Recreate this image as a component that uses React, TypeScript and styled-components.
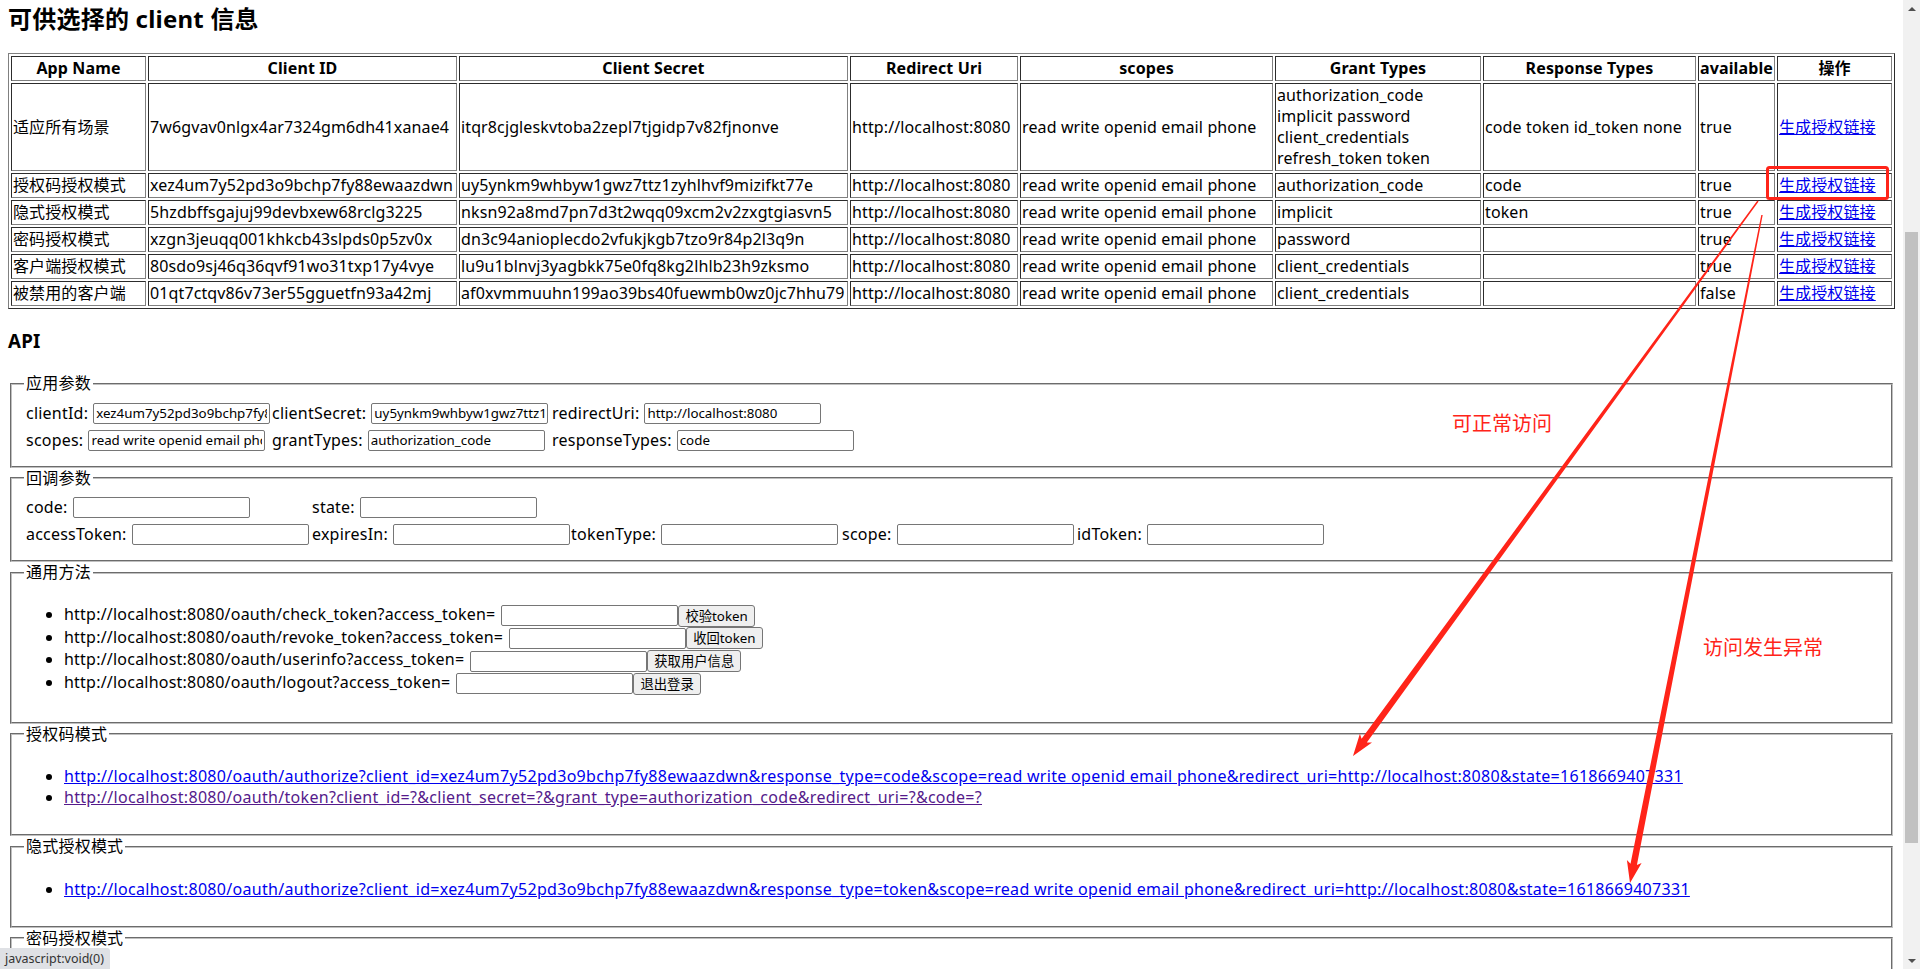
import React from 'react';
import styled, { createGlobalStyle } from 'styled-components';

const RED = '#ff2419';

const GlobalStyle = createGlobalStyle`
  html, body {
    margin: 0;
    padding: 0;
  }

  body {
    font-family: "Noto Sans", "Noto Sans CJK SC", sans-serif;
    font-size: 16px;
    line-height: 21px;
    letter-spacing: 0.22px;
    color: #000;
    background: #fff;
  }
`;

const Shell = styled.div`
  position: relative;
  display: flex;
  height: 100vh;
  overflow: hidden;
`;

const Page = styled.main`
  flex: 1;
  min-width: 0;
  padding: 0 8px;
  overflow: hidden;
`;

const Title = styled.h2`
  margin: 3px 0 0;
  font-size: 24px;
  line-height: 32px;
  font-weight: bold;
`;

const SectionTitle = styled.h3`
  margin: 20px 0;
  font-size: 18.72px;
  line-height: 24px;
  font-weight: bold;
`;

const ClientTable = styled.table`
  width: 100%;
  margin-top: 18px;
  table-layout: fixed;
  border: 1px outset grey;
  border-spacing: 2px;
  letter-spacing: 0.12px;
`;

const Col = styled.col<{ $w: number }>`
  width: ${(p) => p.$w}px;
`;

const HeadCell = styled.th`
  border: 1px inset grey;
  padding: 1px;
  font-weight: bold;
  text-align: center;
  white-space: nowrap;
  overflow: hidden;
`;

const Cell = styled.td<{ $wrap?: boolean }>`
  border: 1px inset grey;
  padding: 1px;
  vertical-align: middle;
  white-space: ${(p) => (p.$wrap ? 'normal' : 'nowrap')};
  overflow: hidden;
`;

const Link = styled.a<{ $visited?: boolean }>`
  color: ${(p) => (p.$visited ? '#551a8b' : '#0000ee')};
  text-decoration: underline;
  cursor: pointer;
`;

const Fieldset = styled.fieldset<{ $minHeight?: number }>`
  margin: 0 2px;
  padding: 5.6px 12px 10px;
  border: 2px groove rgb(192, 192, 192);
  min-width: 0;
  min-height: ${(p) => (p.$minHeight ? `${p.$minHeight}px` : 'auto')};
`;

const Legend = styled.legend`
  padding: 0 2px;
  line-height: 21px;
`;

const ParamGrid = styled.div<{ $cols: string }>`
  display: grid;
  grid-template-columns: ${(p) => p.$cols};
  grid-auto-rows: 27px;
  padding-bottom: 2px;
`;

const Field = styled.label<{ $col?: number }>`
  display: flex;
  align-items: center;
  gap: 5px;
  white-space: nowrap;
  padding-left: 2px;
  grid-column: ${(p) => (p.$col ? `${p.$col} / span 1` : 'auto')};
`;

const TextInput = styled.input`
  box-sizing: border-box;
  flex: none;
  width: 177px;
  height: 21px;
  padding: 1px 2px;
  border: 1px solid #767676;
  border-radius: 2px;
  background: #fff;
  color: #000;
  font-family: "Noto Sans", "Noto Sans CJK SC", sans-serif;
  font-size: 13.33px;
  letter-spacing: 0;
  outline: none;
`;

const InlineInput = styled(TextInput)`
  margin-left: 6px;
  vertical-align: middle;
`;

const Button = styled.button`
  box-sizing: border-box;
  height: 22px;
  padding: 1px 6px;
  border: 1px solid #767676;
  border-radius: 3px;
  background: #efefef;
  color: #000;
  font-family: "Noto Sans", "Noto Sans CJK SC", sans-serif;
  font-size: 13.33px;
  line-height: 18px;
  letter-spacing: 0;
  vertical-align: middle;
`;

const List = styled.ul<{ $tight?: boolean }>`
  margin: ${(p) => (p.$tight ? '14px 0 18px' : '16px 0')};
  padding-left: 40px;
`;

const MethodItem = styled.li`
  height: 22.75px;
  line-height: 22.75px;
  white-space: nowrap;
`;

const LinkItem = styled.li`
  line-height: 21px;
  white-space: nowrap;
  letter-spacing: 0.3px;
`;

const Scrollbar = styled.div`
  flex: none;
  width: 17px;
  display: flex;
  flex-direction: column;
  align-items: center;
  background: #f1f1f1;
`;

const ScrollArrow = styled.div<{ $down?: boolean }>`
  flex: none;
  width: 17px;
  height: 17px;
  display: flex;
  align-items: center;
  justify-content: center;
  margin-top: ${(p) => (p.$down ? 'auto' : '0')};

  &::before {
    content: '';
    border-left: 4px solid transparent;
    border-right: 4px solid transparent;
    ${(p) => (p.$down ? 'border-top: 4px solid #505050;' : 'border-bottom: 4px solid #505050;')}
  }
`;

const ScrollThumb = styled.div`
  width: 13px;
  height: 611px;
  margin-top: 215px;
  background: #c1c1c1;
`;

const Overlay = styled.svg`
  position: absolute;
  inset: 0;
  pointer-events: none;
`;

const Note = styled.span<{ $x: number; $y: number }>`
  position: absolute;
  left: ${(p) => p.$x}px;
  top: ${(p) => p.$y}px;
  color: ${RED};
  font-family: "Noto Sans CJK SC", sans-serif;
  font-size: 20px;
  line-height: 24px;
  letter-spacing: 0;
`;

const StatusBubble = styled.div`
  position: absolute;
  left: 0;
  bottom: 0;
  height: 21px;
  padding: 0 6px 0 5px;
  background: #dfe1e5;
  border-top-right-radius: 3px;
  color: #333;
  font-size: 12.5px;
  line-height: 21px;
  letter-spacing: 0;
`;

type Client = {
  name: string;
  id: string;
  secret: string;
  grant: string;
  response: string;
  available: string;
};

const clients: Client[] = [
  {
    name: '适应所有场景',
    id: '7w6gvav0nlgx4ar7324gm6dh41xanae4',
    secret: 'itqr8cjgleskvtoba2zepl7tjgidp7v82fjnonve',
    grant: 'authorization_code implicit password client_credentials refresh_token token',
    response: 'code token id_token none',
    available: 'true',
  },
  {
    name: '授权码授权模式',
    id: 'xez4um7y52pd3o9bchp7fy88ewaazdwn',
    secret: 'uy5ynkm9whbyw1gwz7ttz1zyhlhvf9mizifkt77e',
    grant: 'authorization_code',
    response: 'code',
    available: 'true',
  },
  {
    name: '隐式授权模式',
    id: '5hzdbffsgajuj99devbxew68rclg3225',
    secret: 'nksn92a8md7pn7d3t2wqq09xcm2v2zxgtgiasvn5',
    grant: 'implicit',
    response: 'token',
    available: 'true',
  },
  {
    name: '密码授权模式',
    id: 'xzgn3jeuqq001khkcb43slpds0p5zv0x',
    secret: 'dn3c94anioplecdo2vfukjkgb7tzo9r84p2l3q9n',
    grant: 'password',
    response: '',
    available: 'true',
  },
  {
    name: '客户端授权模式',
    id: '80sdo9sj46q36qvf91wo31txp17y4vye',
    secret: 'lu9u1blnvj3yagbkk75e0fq8kg2lhlb23h9zksmo',
    grant: 'client_credentials',
    response: '',
    available: 'true',
  },
  {
    name: '被禁用的客户端',
    id: '01qt7ctqv86v73er55gguetfn93a42mj',
    secret: 'af0xvmmuuhn199ao39bs40fuewmb0wz0jc7hhu79',
    grant: 'client_credentials',
    response: '',
    available: 'false',
  },
];

const columns: [string, number][] = [
  ['App Name', 135],
  ['Client ID', 309],
  ['Client Secret', 389],
  ['Redirect Uri', 168],
  ['scopes', 253],
  ['Grant Types', 206],
  ['Response Types', 213],
  ['available', 77],
  ['操作', 115],
];

const HOST = 'http://localhost:8080';
const SCOPES = 'read write openid email phone';
const authorizeUrl = (type: string) =>
  `${HOST}/oauth/authorize?client_id=xez4um7y52pd3o9bchp7fy88ewaazdwn&response_type=${type}&scope=${SCOPES}&redirect_uri=${HOST}&state=1618669407331`;

const methods: [string, string][] = [
  ['check_token', '校验token'],
  ['revoke_token', '收回token'],
  ['userinfo', '获取用户信息'],
  ['logout', '退出登录'],
];

// tapered marker stroke ending in an arrow head
const arrowPoints = (x1: number, y1: number, x2: number, y2: number, w1: number, w2: number) => {
  const len = Math.hypot(x2 - x1, y2 - y1);
  const ux = (x2 - x1) / len;
  const uy = (y2 - y1) / len;
  const nx = -uy;
  const ny = ux;
  const head = 19;
  const headW = 15;
  const bx = x2 - ux * head;
  const by = y2 - uy * head;
  const pts = [
    [x1 + (nx * w1) / 2, y1 + (ny * w1) / 2],
    [bx + (nx * w2) / 2, by + (ny * w2) / 2],
    [bx + (nx * headW) / 2 - ux * 3, by + (ny * headW) / 2 - uy * 3],
    [x2, y2],
    [bx - (nx * headW) / 2 - ux * 3, by - (ny * headW) / 2 - uy * 3],
    [bx - (nx * w2) / 2, by - (ny * w2) / 2],
    [x1 - (nx * w1) / 2, y1 - (ny * w1) / 2],
  ];
  return pts.map((p) => p.map((v) => v.toFixed(1)).join(',')).join(' ');
};

export default function App() {
  return (
    <>
      <GlobalStyle />
      <Shell>
        <Page>
          <Title>可供选择的 client 信息</Title>
          <ClientTable>
            <colgroup>
              {columns.map(([name, w]) => (
                <Col key={name} $w={w} />
              ))}
            </colgroup>
            <thead>
              <tr>
                {columns.map(([name]) => (
                  <HeadCell key={name}>{name}</HeadCell>
                ))}
              </tr>
            </thead>
            <tbody>
              {clients.map((c) => (
                <tr key={c.id}>
                  <Cell>{c.name}</Cell>
                  <Cell>{c.id}</Cell>
                  <Cell>{c.secret}</Cell>
                  <Cell>{HOST}</Cell>
                  <Cell>{SCOPES}</Cell>
                  <Cell $wrap>{c.grant}</Cell>
                  <Cell>{c.response}</Cell>
                  <Cell>{c.available}</Cell>
                  <Cell>
                    <Link>生成授权链接</Link>
                  </Cell>
                </tr>
              ))}
            </tbody>
          </ClientTable>

          <SectionTitle>API</SectionTitle>

          <Fieldset>
            <Legend>应用参数</Legend>
            <ParamGrid $cols="246px 280px 1fr">
              <Field>
                clientId:
                <TextInput defaultValue="xez4um7y52pd3o9bchp7fy88ewaazdwn" />
              </Field>
              <Field>
                clientSecret:
                <TextInput defaultValue="uy5ynkm9whbyw1gwz7ttz1zyhlhvf9mizifkt77e" />
              </Field>
              <Field>
                redirectUri:
                <TextInput defaultValue={HOST} />
              </Field>
              <Field>
                scopes:
                <TextInput defaultValue={SCOPES} />
              </Field>
              <Field>
                grantTypes:
                <TextInput defaultValue="authorization_code" />
              </Field>
              <Field>
                responseTypes:
                <TextInput defaultValue="code" />
              </Field>
            </ParamGrid>
          </Fieldset>

          <Fieldset>
            <Legend>回调参数</Legend>
            <ParamGrid $cols="286px 259px 271px 235px 1fr">
              <Field $col={1}>
                code:
                <TextInput />
              </Field>
              <Field $col={2}>
                state:
                <TextInput />
              </Field>
              <Field $col={1}>
                accessToken:
                <TextInput />
              </Field>
              <Field>
                expiresIn:
                <TextInput />
              </Field>
              <Field>
                tokenType:
                <TextInput />
              </Field>
              <Field>
                scope:
                <TextInput />
              </Field>
              <Field>
                idToken:
                <TextInput />
              </Field>
            </ParamGrid>
          </Fieldset>

          <Fieldset>
            <Legend>通用方法</Legend>
            <List $tight>
              {methods.map(([path, label]) => (
                <MethodItem key={path}>
                  {`${HOST}/oauth/${path}?access_token=`}
                  <InlineInput />
                  <Button type="button">{label}</Button>
                </MethodItem>
              ))}
            </List>
          </Fieldset>

          <Fieldset>
            <Legend>授权码模式</Legend>
            <List>
              <LinkItem>
                <Link>{authorizeUrl('code')}</Link>
              </LinkItem>
              <LinkItem>
                <Link $visited>
                  {`${HOST}/oauth/token?client_id=?&client_secret=?&grant_type=authorization_code&redirect_uri=?&code=?`}
                </Link>
              </LinkItem>
            </List>
          </Fieldset>

          <Fieldset>
            <Legend>隐式授权模式</Legend>
            <List>
              <LinkItem>
                <Link>{authorizeUrl('token')}</Link>
              </LinkItem>
            </List>
          </Fieldset>

          <Fieldset $minHeight={90}>
            <Legend>密码授权模式</Legend>
          </Fieldset>
        </Page>

        <Scrollbar>
          <ScrollArrow />
          <ScrollThumb />
          <ScrollArrow $down />
        </Scrollbar>

        <Overlay width="1920" height="969" viewBox="0 0 1920 969">
          <rect x="1767.5" y="167.5" width="120" height="31" rx="2" fill="none" stroke={RED} strokeWidth="3" />
          <polygon points={arrowPoints(1758, 201, 1353, 756, 1.5, 6.5)} fill={RED} />
          <polygon points={arrowPoints(1762, 215, 1630, 883, 1.5, 6.5)} fill={RED} />
        </Overlay>
        <Note $x={1452} $y={411}>可正常访问</Note>
        <Note $x={1703} $y={635}>访问发生异常</Note>
        <StatusBubble>javascript:void(0)</StatusBubble>
      </Shell>
    </>
  );
}
